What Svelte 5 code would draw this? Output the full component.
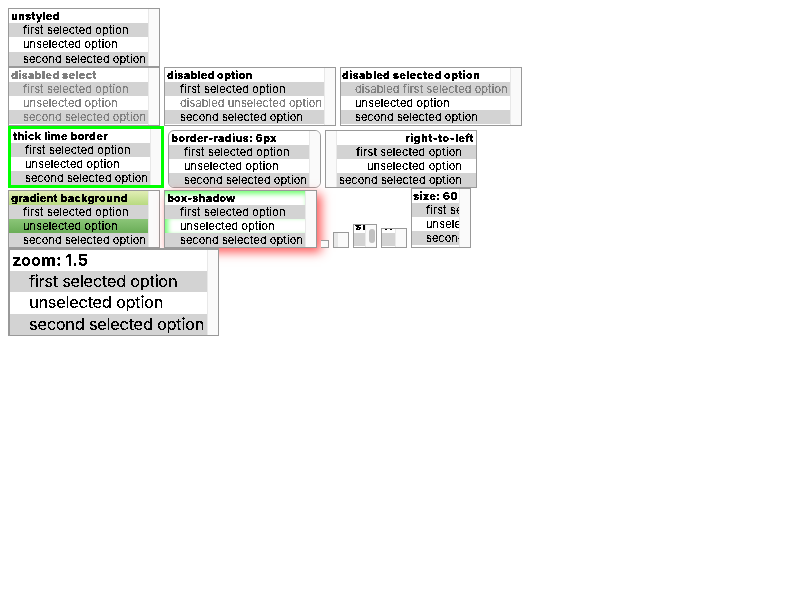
<script>
  const first = { t: 'first selected option', on: true };
  const plain = { t: 'unselected option' };
  const second = { t: 'second selected option', on: true };
  const usual = [first, plain, second];

  const rows = [
    { h: 59, boxes: [{ label: 'unstyled', cls: 'first-row', w: 152, h: 59, ls: 0, opts: usual }] },
    {
      h: 59,
      boxes: [
        { label: 'disabled select', cls: 'disabled', w: 152, h: 59, ls: 0.22, opts: usual },
        { label: 'disabled option', cls: 'indented', w: 172, h: 59, ls: 0.1, opts: [first, { t: 'disabled unselected option', off: true }, second] },
        { label: 'disabled selected option', cls: 'snug', w: 182, h: 59, ls: 0.2, opts: [{ t: 'disabled first selected option', on: true, off: true }, plain, second] }
      ]
    },
    {
      h: 62,
      boxes: [
        { label: 'thick lime border', cls: 'lime', w: 156, h: 62, ls: 0.19, opts: usual },
        { label: 'border-radius: 6px', cls: 'rounded indented', w: 153, h: 58, ls: 0.19, opts: usual },
        { label: 'right-to-left', cls: 'rtl', w: 152, h: 58, ls: 0.28, opts: usual }
      ]
    },
    {
      h: 60,
      boxes: [
        { label: 'gradient background', cls: 'gradient', w: 152, h: 58, ls: 0.14, opts: usual },
        { label: 'box-shadow', cls: 'shadow indented', w: 153, h: 58, ls: 0.05, opts: usual },
        { label: '', cls: 'tiny', w: 8, h: 8, ls: 0, opts: [] },
        { label: '', cls: 'small', w: 16, h: 16, ls: 0, opts: [] },
        { label: 'si', cls: 'cut', w: 24, h: 24, ls: 0.8, opts: [{ t: '', on: true }], thumb: true },
        { label: '...', cls: 'cut dots', w: 26, h: 20, ls: 1, opts: [{ t: '', on: true }] },
        { label: 'size: 60', cls: 'sixty', w: 60, h: 60, ls: 0.2, opts: usual }
      ]
    },
    { h: 88, boxes: [{ label: 'zoom: 1.5', cls: 'zoomed', w: 211, h: 88, ls: -0.1, opts: usual }] }
  ];
</script>

<svg class="defs" width="0" height="0" aria-hidden="true">
  <filter id="crisp" x="0" y="0" width="1" height="1">
    <feComponentTransfer><feFuncA type="discrete" tableValues="0 0 1 1 1" /></feComponentTransfer>
  </filter>
</svg>

<main>
  {#each rows as row}
    <div class="row" style="height: {row.h}px">
      {#each row.boxes as box}
        <div class="select {box.cls}" style="width: {box.w}px; height: {box.h}px">
          <div class="list">
            <div class="line label" style="letter-spacing: {box.ls}px"><span>{box.label}</span></div>
            {#each box.opts as o}
              <div class="line option" class:on={o.on} class:off={o.off}><span>{o.t}</span></div>
            {/each}
          </div>
          <div class="track">{#if box.thumb}<i></i>{/if}</div>
        </div>
      {/each}
    </div>
  {/each}
</main>

<style>
  :global(body) { background: #fff; }
  .defs { position: absolute; }
  main { padding: 8px; font: 11px/14px Inter, "Liberation Sans", sans-serif; color: #000; }
  .row { display: flex; align-items: flex-end; gap: 4px; }
  .select { box-sizing: border-box; flex: none; display: flex; border: 1px solid #999; background: #fff; overflow: hidden; }
  .list { flex: 1; min-width: 0; overflow: hidden; }
  .track { box-sizing: border-box; flex: none; width: 11px; background: #fafafa; border-left: 1px solid #e8e8e8; }
  .line { height: 14px; white-space: nowrap; overflow: hidden; }
  .line span { display: inline-block; filter: url(#crisp); }
  .label { font-weight: 800; padding-left: 2px; }
  .option { padding-left: 14px; letter-spacing: 0.11px; }
  .option:nth-child(4) { letter-spacing: 0.07px; }
  .option.off { letter-spacing: 0.08px; }
  .indented .option { padding-left: 15px; }
  .snug .label, .sixty .label { padding-left: 1px; }
  .on { background: #d3d3d3; }
  .off, .disabled { color: #808080; }
  .first-row .option:nth-child(3) { height: 15px; }
  .lime { border: 3px solid #0f0; }
  .rounded { border-radius: 6px; }
  .rtl { direction: rtl; }
  .rtl .label { padding: 0 2px 0 0; }
  .rtl .option { padding: 0 14px 0 0; }
  .rtl .track { border-left: 0; border-right: 1px solid #e8e8e8; }
  .gradient .label { background: linear-gradient(#e1edb5, #b8da80); }
  .gradient .option:nth-child(3) { background: linear-gradient(#8bc578, #6aad57); }
  .shadow { box-shadow: 4px 4px 10px #f55; }
  .shadow .label { box-shadow: inset 0 5px 5px -2px #7f7; }
  .shadow .option:nth-child(3) { box-shadow: inset 5px 0 5px -2px #7f7; }
  .tiny .label, .small .label { padding: 0; }
  .tiny { border-left: 0; }
  .tiny .track { width: 7px; border: 0; }
  .small .list { background: #e8e8e8; }
  .cut .label { height: 8px; line-height: 3px; padding-left: 1px; }
  .cut .option { height: 13px; }
  .dots .label { height: 4px; line-height: 0; padding-left: 2px; }
  .dots .label span { margin-top: -3px; vertical-align: top; }
  .cut .track i { display: block; width: 6px; height: 14px; margin: 4px 0 0 3px; border-radius: 3px; background: #c1c1c1; }
  .zoomed { font-size: 16.5px; line-height: 21px; border-left-width: 2px; border-top-width: 2px; }
  .zoomed .line { height: 21px; }
  .zoomed .label { padding-left: 2px; font-weight: 700; }
  .zoomed .option { padding-left: 19px; letter-spacing: -0.32px; }
  .zoomed .option:nth-child(3) { height: 22px; }
</style>
